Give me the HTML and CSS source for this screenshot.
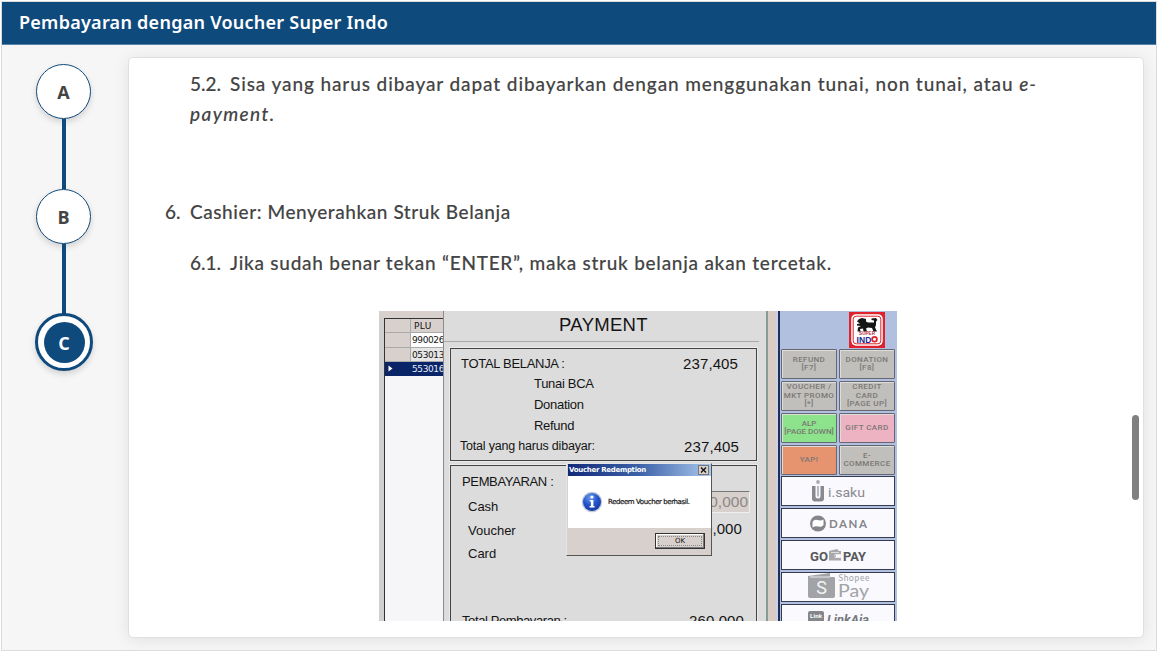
FILE: index.html
```html
<!DOCTYPE html>
<html lang="id">
<head>
<meta charset="utf-8">
<title>Pembayaran dengan Voucher Super Indo</title>
<link rel="stylesheet" href="styles.css">
</head>
<body>
<div class="frame">
  <header class="topbar"><h1>Pembayaran dengan Voucher Super Indo</h1></header>
  <main class="main">
    <nav class="steps">
      <div class="step">A</div>
      <div class="link"></div>
      <div class="step">B</div>
      <div class="link"></div>
      <div class="step current"><span>C</span></div>
    </nav>
    <section class="card">
      <div class="item sub one"><span class="no">5.2.</span>
        <p class="l1">Sisa yang harus dibayar dapat dibayarkan dengan menggunakan tunai, non tunai, atau <em>e-</em></p>
      </div>
      <div class="item sub"><p class="l2"><em>payment.</em></p></div>
      <div class="item head"><span class="no">6.</span><h2>Cashier: Menyerahkan Struk Belanja</h2></div>
      <div class="item sub two"><span class="no">6.1.</span><p class="l3">Jika sudah benar tekan “ENTER”, maka struk belanja akan tercetak.</p></div>

      <div class="pos">
        <div class="plu">
          <div class="plu-table">
            <div class="plu-row plu-head"><i></i><b>PLU</b></div>
            <div class="plu-row first"><i></i><b>990026</b></div>
            <div class="plu-row"><i></i><b>053013</b></div>
            <div class="plu-row picked"><i>
              <svg width="5" height="7" viewBox="0 0 5 7"><path d="M0.5 0.5L4.5 3.5L0.5 6.5Z" fill="#fff"/></svg></i><b>553016</b></div>
          </div>
        </div>
        <div class="pay">
          <div class="pay-title">PAYMENT</div>
          <div class="box totals">
            <div class="row"><span class="t1">TOTAL BELANJA :</span><span class="num">237,405</span></div>
            <div class="row in"><span>Tunai BCA</span></div>
            <div class="row in"><span>Donation</span></div>
            <div class="row in"><span>Refund</span></div>
            <div class="row"><span class="t5">Total yang harus dibayar:</span><span class="num last">237,405</span></div>
          </div>
          <div class="box paid">
            <div class="row heading"><span>PEMBAYARAN :</span></div>
            <div class="row"><span>Cash</span><span class="field">200,000</span></div>
            <div class="row"><span>Voucher</span><span class="num vnum">60,000</span></div>
            <div class="row"><span>Card</span></div>
            <div class="row sum"><span>Total Pembayaran :</span><span class="num">260,000</span></div>
          </div>
        </div>
        <div class="gutter"></div>
        <div class="keys">
          <div class="logo">
            <svg width="36" height="36" viewBox="0 0 36 36">
              <rect width="36" height="36" fill="#e0222c"/>
              <rect x="2.8" y="2.8" width="30.4" height="30.4" rx="4" fill="#fff" stroke="#fff"/>
              <rect x="4.2" y="4.2" width="27.6" height="27.6" rx="3" fill="#fff" stroke="#e0222c" stroke-width="1"/>
              <path d="M8 9.500L10 7L13 6L17 7V9.500L19 10.500H25V8.500L22.500 8V6.500L27 6L28.500 8L27 9.500V13L26 15.500L28 19.500H24.500L23 16L19 15.500L17 16.500L18 19.500H14.500L14 16.500L11 17L11.500 19.500H8.500L9 15.500L12 14L8 13.500V12L11 11.500Z" fill="#161616"/>
              <text x="18" y="23.300" text-anchor="middle" font-size="4.500" textLength="16" class="lg blue">SUPER</text>
              <text x="7.500" y="30.500" font-size="8.500" textLength="15" class="lg navy">IND</text>
              <circle cx="25.5" cy="27.300" r="2.400" fill="#fff" stroke="#e0222c" stroke-width="1.700"/>
            </svg>
          </div>
          <div class="key">REFUND<br>[F7]</div>
          <div class="key">DONATION<br>[F8]</div>
          <div class="key">VOUCHER /<br>MKT PROMO<br>[*]</div>
          <div class="key">CREDIT<br>CARD<br>[PAGE UP]</div>
          <div class="key green">ALP<br>[PAGE DOWN]</div>
          <div class="key pink">GIFT CARD</div>
          <div class="key orange">YAP!</div>
          <div class="key">E-<br>COMMERCE</div>
          <div class="brand">
            <svg width="114" height="30" viewBox="0 0 114 30">
              <circle cx="37" cy="6" r="1.900" fill="#aaabb0"/>
              <path d="M31 10H34.500V20Q34.500 22.500 37 22.500Q39.500 22.500 39.500 20V10H43V22.500Q43 25.500 40 25.500H34Q31 25.500 31 22.500Z" fill="#898a90"/>
              <path d="M36 10H38V20.500H36Z" fill="#b9bac0"/>
              <text x="47" y="20.500" font-size="13.500" textLength="37" lengthAdjust="spacingAndGlyphs" class="isaku">i.saku</text>
            </svg>
          </div>
          <div class="brand">
            <svg width="114" height="30" viewBox="0 0 114 30">
              <circle cx="37" cy="15.500" r="8" fill="#85868b"/>
              <path d="M31.500 14Q33 11 36.500 12Q40 13 42.500 11.500V17Q41 19.500 37.500 18.500Q34 17.500 31.500 19.500Z" fill="#fff"/>
              <text x="48" y="20" font-size="11.500" textLength="38" class="dana">DANA</text>
            </svg>
          </div>
          <div class="brand">
            <svg width="114" height="30" viewBox="0 0 114 30">
              <text x="29" y="20.500" font-size="12.500" textLength="18" lengthAdjust="spacingAndGlyphs" class="gopay">GO</text>
              <path d="M48 11L56 9L58 11H60V14H55V18H60V20.500H48Z" fill="#a9a9ac"/>
              <path d="M50 12.500H58M54 14.500H60V17.500H54Z" fill="none" stroke="#e9e9ee" stroke-width=".8"/>
              <text x="62" y="20.500" font-size="12.500" textLength="23" lengthAdjust="spacingAndGlyphs" class="gopay">PAY</text>
            </svg>
          </div>
          <div class="brand">
            <svg width="114" height="30" viewBox="0 0 114 30">
              <path d="M27 4L49 1V5H53Q54 5 54 6V24Q54 26 52 26H29Q27 26 27 24Z" fill="#a2a3a6"/>
              <path d="M29 5H49" stroke="#e9e9ef" stroke-width="1"/>
              <text x="40.500" y="22" text-anchor="middle" font-size="18" class="shopee-s">S</text>
              <text x="57.500" y="8.500" font-size="8.500" textLength="31" class="shopee">Shopee</text>
              <text x="57" y="24.500" font-size="17.500" textLength="31" lengthAdjust="spacingAndGlyphs" class="shopee">Pay</text>
            </svg>
          </div>
          <div class="brand">
            <svg width="114" height="30" viewBox="0 0 114 30">
              <rect x="27" y="7" width="16" height="16" rx="2" fill="#85868b"/>
              <text x="29" y="13.500" font-size="6" textLength="12" class="link-mini">Link</text>
              <text x="29" y="20.500" font-size="6" textLength="12" class="link-mini">Aja!</text>
              <text x="46" y="20" font-size="13" textLength="42" lengthAdjust="spacingAndGlyphs" class="linkaja">LinkAja</text>
            </svg>
          </div>
        </div>

        <div class="dialog">
          <div class="dialog-title"><span>Voucher Redemption</span>
            <svg width="11" height="10" viewBox="0 0 11 10"><rect x=".5" y=".5" width="10" height="9" fill="#d8d0c8" stroke="#777"/><path d="M3 2.500L8 7.500M8 2.500L3 7.500" stroke="#111" stroke-width="1.300"/></svg>
          </div>
          <div class="dialog-body">
            <svg width="22" height="22" viewBox="0 0 22 22">
              <defs><radialGradient id="ball" cx=".4" cy=".25" r=".8"><stop offset="0" stop-color="#6f9af0"/><stop offset=".5" stop-color="#2457cc"/><stop offset="1" stop-color="#1234a4"/></radialGradient></defs>
              <circle cx="11" cy="11" r="10.300" fill="#c3c9d6"/>
              <circle cx="11" cy="11" r="9" fill="url(#ball)"/>
              <circle cx="11" cy="6" r="1.600" fill="#fff"/>
              <path d="M8.800 9H12.400V15H13.600V16.500H8.600V15H9.900V10.400H8.800Z" fill="#fff"/>
            </svg>
            <span>Redeem Voucher berhasil.</span>
          </div>
          <div class="dialog-foot"><div class="ok"><span>OK</span></div></div>
        </div>
      </div>
      <div class="thumb"></div>
    </section>
  </main>
</div>
</body>
</html>
```
FILE: styles.css
```css
* { box-sizing: border-box; }
body { margin: 0; background: #fff; font-family: "Open Sans", "Noto Sans", sans-serif; color: #444; }
h1, h2, p { margin: 0; }
svg { display: block; flex: none; }

.frame { width: 1156px; height: 650px; margin: 1px; border: 1px solid #dcdcdc; background: #f6f6f6; display: flex; flex-direction: column; overflow: hidden; }
.topbar { height: 43px; flex: none; background: #0f4a7d; border-bottom: 1px solid #5583a8; padding: 0 0 2px 17px; display: flex; align-items: center; }
.topbar h1 { font-family: "Noto Sans", "Open Sans", sans-serif; font-size: 18px; font-weight: 600; color: #fff; line-height: 40px; letter-spacing: .26px; white-space: nowrap; }

.main { flex: 1; display: flex; min-height: 0; padding: 12px 12px 12px 0; }
.steps { width: 126px; flex: none; padding: 7px 0 0 34px; display: flex; flex-direction: column; }
.step { width: 55px; height: 55px; flex: none; border: 1px solid #0f4a7d; border-radius: 50%; background: #fff; display: flex; align-items: center; justify-content: center; font-size: 18px; font-weight: 700; box-shadow: 0 3px 6px rgba(0, 0, 0, .15); }
.link { width: 4px; height: 70px; flex: none; background: #0f4a7d; margin-left: 26px; }
.step.current { width: 58px; height: 58px; margin: -1px 0 0 -1px; border-width: 3px; padding: 0; }
.step.current span { width: 41px; height: 41px; border-radius: 50%; background: #0f4a7d; color: #fff; display: flex; align-items: center; justify-content: center; padding-top: 1px; }

.card { position: relative; flex: 1; min-width: 0; background: #fff; border: 1px solid #e0e0e0; border-radius: 5px; box-shadow: 0 2px 16px rgba(0, 0, 0, .09); padding: 11px 0 0 36px; font-family: Lato, "Open Sans", sans-serif; font-size: 19px; line-height: 30px; font-weight: 500; color: #444; }
.item { white-space: nowrap; display: flex; -webkit-text-stroke: .12px #444; }
.item.sub { padding-left: 25px; }
.item h2 { font-size: 19px; font-weight: 500; letter-spacing: .57px; }
.head { margin-top: 68px; }
.head .no { width: 25px; }
.two { margin-top: 21px; }
.one .no, .two .no { width: 40px; }
.l1 { letter-spacing: .9px; }
.l2 { letter-spacing: 1.400px; }
.l3 { letter-spacing: .74px; }

.pos { position: relative; width: 518px; height: 310px; margin: 33px 0 0 214px; overflow: hidden; display: flex; background: #d0cfcf; color: #141414; font-family: "Liberation Sans", Arial, sans-serif; font-size: 13px; font-weight: 400; line-height: 1; white-space: nowrap; }
.plu { width: 64px; flex: none; padding: 7px 0 0 5px; background: linear-gradient(#d8d0cc 7px, #d0d0d2 7px); overflow: hidden; }
.plu-table { height: 303px; background: #f6f6f8; border: solid #333; border-width: 1px 0 0 1px; }
.plu-row { height: 14.300px; display: flex; font-family: "DejaVu Sans", sans-serif; font-size: 9px; border-bottom: 1px solid #aaa; background: #e6e6e6; overflow: hidden; }
.plu-row i { width: 26px; flex: none; background: #d8d0cc; border-right: 1px solid #aaa; padding: 3px 0 0 3px; }
.plu-row b { font-weight: 400; padding: 3px 0 0 1px; letter-spacing: -.4px; }
.plu-head b { padding-left: 3px; letter-spacing: .4px; }
.plu-head { background: #d8d0cc; }
.plu-row.first { background: #fff; }
.plu-row.picked, .plu-row.picked i { background: #0a2468; color: #e8ecf8; border-color: #0a2468; }

.pay { width: 325px; flex: none; background: #dcdcdc; border-left: 1px solid #8c8c8c; border-right: 2px solid #869b91; padding: 0 9px 0 6px; }
.pay-title { height: 31px; border-bottom: 1px solid #aaa; margin: 0 -2px 6px -6px; padding-top: 5px; padding-left: 4px; text-align: center; font-size: 18.500px; letter-spacing: .3px; }
.box { border: 1.500px solid #444; outline: 1px solid #eaeaea; }
.row { height: 20.500px; display: flex; align-items: center; justify-content: space-between; }
.totals { height: 113px; padding: 4px 18px 0 10px; }
.totals .row:nth-child(n+4) { position: relative; top: 1px; }
.totals .in { padding-left: 73px; }
.totals .in span { letter-spacing: -.3px; }
.t1 { letter-spacing: -.3px; }
.t5 { margin-left: -1px; font-size: 12.500px; letter-spacing: -.2px; }
.num { font-size: 15px; letter-spacing: .1px; }
.num.last { margin-right: -1px; }
.paid { height: 190px; margin-top: 4px; padding: 4px 14px 0 17px; }
.paid .row { height: 23.500px; }
.paid .heading { margin: 0 0 1.500px -6px; letter-spacing: -.35px; }
.paid .field { width: 70px; height: 22px; margin: -9px -8px 0 0; padding: 2px 1px 0 0; border: 1px solid #8c8480; border-color: #777 #eee #eee #777; background: #d8d0cc; color: #8e8886; text-align: right; font-size: 15.500px; }
.vnum { margin-top: -3px; }
.paid .sum { margin: 43.500px -2px 0 -6px; letter-spacing: -.4px; }
.gutter { width: 12px; flex: none; background: linear-gradient(90deg, #d8ccc4 8px, #ccd0e8 8px, #ccd0e8 10.500px, #1d2f55 10.500px); }

.keys { width: 117px; flex: none; background: #b1c0df; padding: 1px 1px 0 1px; display: grid; grid-template-columns: 56px 56px; grid-template-rows: 35px; grid-auto-rows: 30px; gap: 2px; align-content: start; }
.logo { grid-column: 1 / 3; padding-left: 68px; }
.key { display: flex; align-items: center; justify-content: center; text-align: center; background: #c1bfbb; border: 1px solid #667; box-shadow: inset 1px 1px #deded8; color: #7a7876; font-family: Roboto, "Liberation Sans", sans-serif; font-size: 8px; line-height: 8.500px; letter-spacing: .4px; font-weight: 500; overflow: hidden; border-radius: 1px; }
.green { background: #8de38c; letter-spacing: 0; }
.pink { background: #eeb3c3; }
.orange { background: #e6936f; }
.brand { grid-column: 1 / 3; margin-top: -1px; height: 30px; background: #f9f9fe; border: 1px solid #353c50; display: flex; align-items: center; justify-content: center; overflow: hidden; }
.lg { font-family: "Liberation Sans", sans-serif; font-weight: 700; }
.blue { fill: #b0263c; }
.navy { fill: #1c2a92; }
.isaku { fill: #8b8b90; font-family: Roboto, sans-serif; }
.dana { fill: #85868b; font-family: Lato, sans-serif; font-weight: 700; }
.gopay { fill: #58585b; font-family: Roboto, sans-serif; font-weight: 700; }
.shopee { fill: #a2a3a6; font-family: Lato, sans-serif; }
.shopee-s { fill: #f3f3f6; font-family: Roboto, sans-serif; }
.link-mini { fill: #fff; font-family: Roboto, sans-serif; font-weight: 700; }
.linkaja { fill: #77787c; font-family: Roboto, sans-serif; font-weight: 700; font-style: italic; }

.dialog { position: absolute; left: 187px; top: 152px; width: 146px; height: 93px; background: #d8d0cc; border: 1px solid #e6e6e6; border-right: 1.500px solid #555; border-bottom: 1.500px solid #555; display: flex; flex-direction: column; font-family: "DejaVu Sans", sans-serif; }
.dialog-title { height: 12px; margin-left: 1px; flex: none; padding: 0 2px 0 1px; background: linear-gradient(90deg, #12297a, #3d62a8 50%, #a9c8ee); color: #fff; display: flex; align-items: center; justify-content: space-between; font-size: 7px; font-weight: 700; }
.dialog-title span { letter-spacing: -.3px; }
.dialog-body { height: 52px; margin-left: 1px; flex: none; background: #fff; display: flex; align-items: center; gap: 5px; padding-left: 13px; font-size: 7px; }
.dialog-body span { letter-spacing: -.42px; -webkit-text-stroke: .2px #141414; }
.dialog-foot { display: flex; justify-content: flex-end; padding: 5px 6px 0 0; }
.ok { width: 50px; height: 16px; border: 1px solid #333; box-shadow: inset -1px -1px #777, inset 1px 1px #fff; padding: 2px; font-size: 7px; }
.ok span { display: block; height: 10px; border: 1px dotted #888; text-align: center; line-height: 8px; }

.thumb { position: absolute; right: 4px; top: 357px; width: 7px; height: 85px; border-radius: 4px; background: #808080; }
```
